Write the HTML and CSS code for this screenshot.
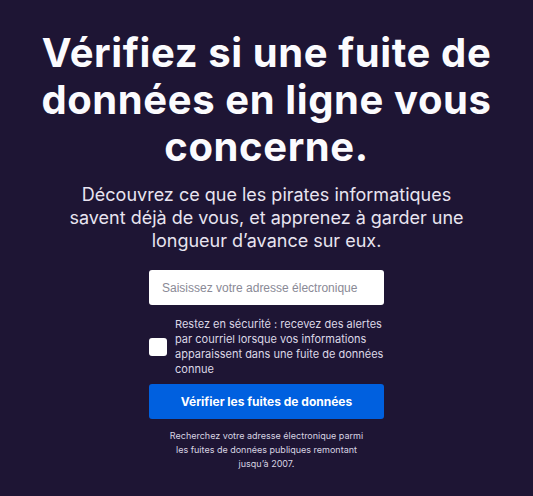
FILE: index.html
```html
<!DOCTYPE html>
<html lang="fr">

<head>
    <meta charset="UTF-8">
    <meta name="viewport" content="width=device-width, initial-scale=1.0">
    <title>Monitor</title>
    <link rel="stylesheet" href="styles.css">
</head>

<body>
    <div class="hero">
        <h1>Vérifiez si une fuite de données en ligne vous concerne.</h1>
        <p class="lead">Découvrez ce que les pirates informatiques savent déjà de vous, et apprenez à garder une longueur d’avance sur eux.</p>

        <form class="scan-form">
            <input type="email" class="email-input" placeholder="Saisissez votre adresse électronique">
            <label class="alerts">
                <input type="checkbox" class="alerts-box">
                <span>Restez en sécurité : recevez des alertes par courriel lorsque vos informations apparaissent dans une fuite de données connue</span>
            </label>
            <button type="button" class="scan-button">Vérifier les fuites de données</button>
            <p class="note">Recherchez votre adresse électronique parmi les fuites de données publiques remontant jusqu’à 2007.</p>
        </form>
    </div>
</body>

</html>
```

FILE: styles.css
```css
body {
    margin: 0;
    background-color: #1e1534;
    color: #fbfbfe;
    font-family: Inter, "Noto Sans", sans-serif;
}

.hero {
    display: flex;
    flex-direction: column;
    align-items: center;
    text-align: center;
    padding-top: 29px;
}

h1 {
    margin: 0;
    width: 500px;
    font-size: 40px;
    line-height: 47px;
    font-weight: 700;
    letter-spacing: 0.6px;
}

.lead {
    margin: 13px 0 0;
    width: 410px;
    font-size: 18px;
    line-height: 23px;
    color: #e8e4f0;
}

.scan-form {
    width: 235px;
    margin-top: 18px;
    display: flex;
    flex-direction: column;
}

.email-input {
    box-sizing: border-box;
    height: 35px;
    width: 100%;
    border: none;
    border-radius: 3px;
    padding: 0 13px;
    font-family: "Liberation Sans", Arial, sans-serif;
    font-size: 12px;
}

.email-input::placeholder {
    color: #8a8a96;
}

.alerts {
    display: flex;
    align-items: center;
    gap: 8px;
    margin-top: 12px;
    text-align: left;
    font-size: 11px;
    line-height: 15px;
    color: #dcd8e6;
}

.alerts-box {
    appearance: none;
    flex: none;
    width: 18px;
    height: 18px;
    margin: 0;
    border-radius: 3px;
    background: #fff;
}

.scan-button {
    margin-top: 7px;
    height: 35px;
    border: none;
    border-radius: 3px;
    background-color: #0060df;
    color: #fff;
    font-family: inherit;
    font-size: 12px;
    font-weight: 700;
}

.note {
    margin: 10px 0 0;
    padding: 0 18px;
    font-size: 9px;
    line-height: 14px;
    color: #d8d4e2;
}
```
